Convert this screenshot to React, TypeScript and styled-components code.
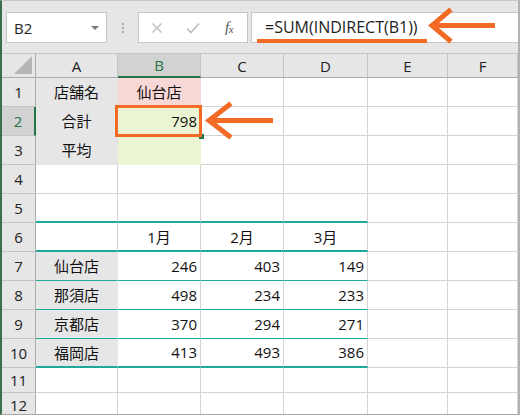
import React from 'react';
import styled, { createGlobalStyle } from 'styled-components';

const GlobalStyle = createGlobalStyle`
  html, body { margin: 0; padding: 0; background: #ffffff; }
  body { font-family: "Open Sans", "Noto Sans CJK JP", sans-serif; }
  *, *::before, *::after { box-sizing: border-box; }
`;

const GREY = '#e7e6e6';
const PINK = '#f8d7d7';
const LIME = '#ebf4d3';
const TEAL = '#1fa99a';
const GRID = '#d4d4d4';
const XL_GREEN = '#217346';
const ORANGE = '#f26a24';

const Page = styled.div`
  position: relative;
  width: 520px;
  height: 415px;
  overflow: hidden;
`;

const Window = styled.div`
  width: 520px;
  height: 415px;
  display: flex;
  flex-direction: column;
  background: #e6e6e6;
  border-left: 2px solid #3b6f50;
  border-top: 1px solid #c9c9c9;
  border-right: 2px solid #b2b2b2;
  border-bottom: 1px solid #a9a9a9;
  overflow: hidden;
`;

const Toolbar = styled.div`
  flex: 0 0 52px;
  display: flex;
  align-items: stretch;
  padding: 11px 0 10px 4px;
`;

const NameBox = styled.div`
  width: 101px;
  display: flex;
  align-items: center;
  justify-content: space-between;
  padding: 0 7px 0 7px;
  background: #fff;
  border: 1px solid #c6c6c6;
  font-size: 15px;
  color: #222;
`;

const Caret = styled.span`
  width: 0;
  height: 0;
  border-left: 4px solid transparent;
  border-right: 4px solid transparent;
  border-top: 4px solid #7a7a7a;
`;

const Grip = styled.div`
  width: 31px;
  display: flex;
  flex-direction: column;
  align-items: center;
  justify-content: center;
  gap: 2px;
`;

const GripDot = styled.span`
  width: 2px;
  height: 2px;
  background: #a8a8a8;
`;

const FxBox = styled.div`
  width: 110px;
  display: grid;
  grid-template-columns: repeat(3, 36px);
  background: #fff;
  border: 1px solid #c6c6c6;
`;

const FxSlot = styled.div`
  display: flex;
  align-items: center;
  justify-content: center;
`;

const FxLabel = styled.span`
  font-family: "Liberation Serif", serif;
  font-style: italic;
  font-size: 15px;
  color: #555;
  letter-spacing: -0.5px;
  & > small {
    font-size: 11px;
    position: relative;
    top: 1px;
  }
`;

const Formula = styled.div`
  flex: 1;
  margin-left: 3px;
  display: flex;
  align-items: center;
  padding-left: 13px;
  padding-bottom: 1px;
  background: #fff;
  border: 1px solid #c6c6c6;
  border-right: none;
  font-size: 16px;
  color: #222;
`;

const Sheet = styled.div`
  flex: 1;
  display: grid;
  grid-template-columns: 34px 82px 83px 83px 84px 80px 1fr;
  grid-template-rows: 24px repeat(10, 29px) 25px 25px;
  background: #fff;
  border-top: 1px solid #c6c6c6;
  font-size: 15px;
`;

const Corner = styled.div`
  display: flex;
  align-items: flex-end;
  justify-content: flex-end;
  padding: 0 3px 3px 0;
  background: #e6e6e6;
  border-right: 1px solid #ababab;
  border-bottom: 1px solid #ababab;
`;

const CornerMark = styled.span`
  width: 18px;
  height: 18px;
  background: #b5b5b5;
  clip-path: polygon(100% 0, 100% 100%, 0 100%);
`;

const ColHead = styled.div<{ $sel?: boolean }>`
  display: flex;
  align-items: center;
  justify-content: center;
  background: ${p => (p.$sel ? '#d2d2d2' : '#e6e6e6')};
  border-right: 1px solid #c4c4c4;
  border-bottom: ${p => (p.$sel ? `2px solid ${XL_GREEN}` : '1px solid #ababab')};
  color: ${p => (p.$sel ? XL_GREEN : '#222')};
`;

const RowHead = styled.div<{ $sel?: boolean }>`
  display: flex;
  align-items: center;
  justify-content: center;
  padding-bottom: 1px;
  background: ${p => (p.$sel ? '#d2d2d2' : '#e6e6e6')};
  border-right: ${p => (p.$sel ? `2px solid ${XL_GREEN}` : '1px solid #ababab')};
  border-bottom: 1px solid #c4c4c4;
  color: ${p => (p.$sel ? XL_GREEN : '#222')};
`;

type Border = 'thin' | 'thick';
type Align = 'c' | 'r';

const Cell = styled.div<{ $bg?: string; $align?: Align; $bottom?: Border }>`
  position: relative;
  display: flex;
  align-items: center;
  justify-content: ${p => (p.$align === 'r' ? 'flex-end' : p.$align === 'c' ? 'center' : 'flex-start')};
  padding: 0 3px 1px 3px;
  background: ${p => p.$bg ?? '#fff'};
  border-right: 1px solid ${p => p.$bg ?? GRID};
  border-bottom: ${p =>
    p.$bottom === 'thick'
      ? `2px solid ${TEAL}`
      : p.$bottom === 'thin'
      ? `1px solid ${TEAL}`
      : `1px solid ${p.$bg ?? GRID}`};
  color: #111;
  white-space: nowrap;
`;

const Selection = styled.span`
  position: absolute;
  top: -2px;
  left: -3px;
  right: -2px;
  bottom: -2px;
  border: 3px solid ${ORANGE};
  pointer-events: none;
  z-index: 2;
`;

const FillHandle = styled.span`
  position: absolute;
  right: -4px;
  bottom: -4px;
  width: 5px;
  height: 5px;
  background: ${XL_GREEN};
  z-index: 1;
`;

const CellText = styled.span`
  position: relative;
  z-index: 3;
`;

const Overlay = styled.svg`
  position: absolute;
  left: 0;
  top: 0;
  pointer-events: none;
`;

interface CellSpec {
  t?: string;
  a?: Align;
  bg?: string;
  b?: Border;
  sel?: boolean;
}

const e = (): CellSpec => ({});

const dataRows: [string, number, number, number][] = [
  ['仙台店', 246, 403, 149],
  ['那須店', 498, 234, 233],
  ['京都店', 370, 294, 271],
  ['福岡店', 413, 493, 386],
];

const rows: CellSpec[][] = [
  [{ t: '店舗名', a: 'c', bg: GREY }, { t: '仙台店', a: 'c', bg: PINK }, e(), e(), e(), e()],
  [{ t: '合計', a: 'c', bg: GREY }, { t: '798', a: 'r', bg: LIME, sel: true }, e(), e(), e(), e()],
  [{ t: '平均', a: 'c', bg: GREY }, { bg: LIME }, e(), e(), e(), e()],
  [e(), e(), e(), e(), e(), e()],
  [{ b: 'thick' }, { b: 'thick' }, { b: 'thick' }, { b: 'thick' }, e(), e()],
  [
    { b: 'thick' },
    { t: '1月', a: 'c', b: 'thick' },
    { t: '2月', a: 'c', b: 'thick' },
    { t: '3月', a: 'c', b: 'thick' },
    e(),
    e(),
  ],
  ...dataRows.map(([name, m1, m2, m3], i): CellSpec[] => {
    const b: Border = i === dataRows.length - 1 ? 'thick' : 'thin';
    return [
      { t: name, a: 'c', bg: GREY, b },
      { t: String(m1), a: 'r', b },
      { t: String(m2), a: 'r', b },
      { t: String(m3), a: 'r', b },
      e(),
      e(),
    ];
  }),
  [e(), e(), e(), e(), e(), e()],
  [e(), e(), e(), e(), e(), e()],
];

const columns = ['A', 'B', 'C', 'D', 'E', 'F'];

const CrossIcon = () => (
  <svg width="12" height="12" viewBox="0 0 12 12">
    <path d="M1.5 1.5 L10.5 10.5 M10.5 1.5 L1.5 10.5" stroke="#bdbdbd" strokeWidth="1.4" fill="none" />
  </svg>
);

const CheckIcon = () => (
  <svg width="14" height="12" viewBox="0 0 14 12">
    <path d="M1 6.5 L5 10.5 L13 1.5" stroke="#bdbdbd" strokeWidth="1.6" fill="none" />
  </svg>
);

export default function App() {
  return (
    <>
      <GlobalStyle />
      <Page>
        <Window>
          <Toolbar>
            <NameBox>
              <span>B2</span>
              <Caret />
            </NameBox>
            <Grip>
              <GripDot />
              <GripDot />
              <GripDot />
            </Grip>
            <FxBox>
              <FxSlot>
                <CrossIcon />
              </FxSlot>
              <FxSlot>
                <CheckIcon />
              </FxSlot>
              <FxSlot>
                <FxLabel>
                  f<small>x</small>
                </FxLabel>
              </FxSlot>
            </FxBox>
            <Formula>=SUM(INDIRECT(B1))</Formula>
          </Toolbar>
          <Sheet>
            <Corner>
              <CornerMark />
            </Corner>
            {columns.map(c => (
              <ColHead key={c} $sel={c === 'B'}>
                {c}
              </ColHead>
            ))}
            {rows.map((row, ri) => (
              <React.Fragment key={ri}>
                <RowHead $sel={ri === 1}>{ri + 1}</RowHead>
                {row.map((cell, ci) => (
                  <Cell key={ci} $bg={cell.bg} $align={cell.a} $bottom={cell.b}>
                    {cell.sel && (
                      <>
                        <FillHandle />
                        <Selection />
                      </>
                    )}
                    {cell.t && <CellText>{cell.t}</CellText>}
                  </Cell>
                ))}
              </React.Fragment>
            ))}
          </Sheet>
        </Window>
        <Overlay width="520" height="415" viewBox="0 0 520 415">
          <rect x="257" y="39" width="170" height="4" fill={ORANGE} />
          <line x1="433" y1="25.5" x2="495" y2="25.5" stroke={ORANGE} strokeWidth="5" />
          <polyline
            points="451,9.5 432,25.5 451,41.5"
            fill="none"
            stroke={ORANGE}
            strokeWidth="5"
            strokeLinejoin="miter"
            strokeMiterlimit="10"
          />
          <line x1="210" y1="120.5" x2="273" y2="120.5" stroke={ORANGE} strokeWidth="5" />
          <polyline
            points="231,103.5 209,120.5 231,137.5"
            fill="none"
            stroke={ORANGE}
            strokeWidth="5"
            strokeLinejoin="miter"
            strokeMiterlimit="10"
          />
        </Overlay>
      </Page>
    </>
  );
}
